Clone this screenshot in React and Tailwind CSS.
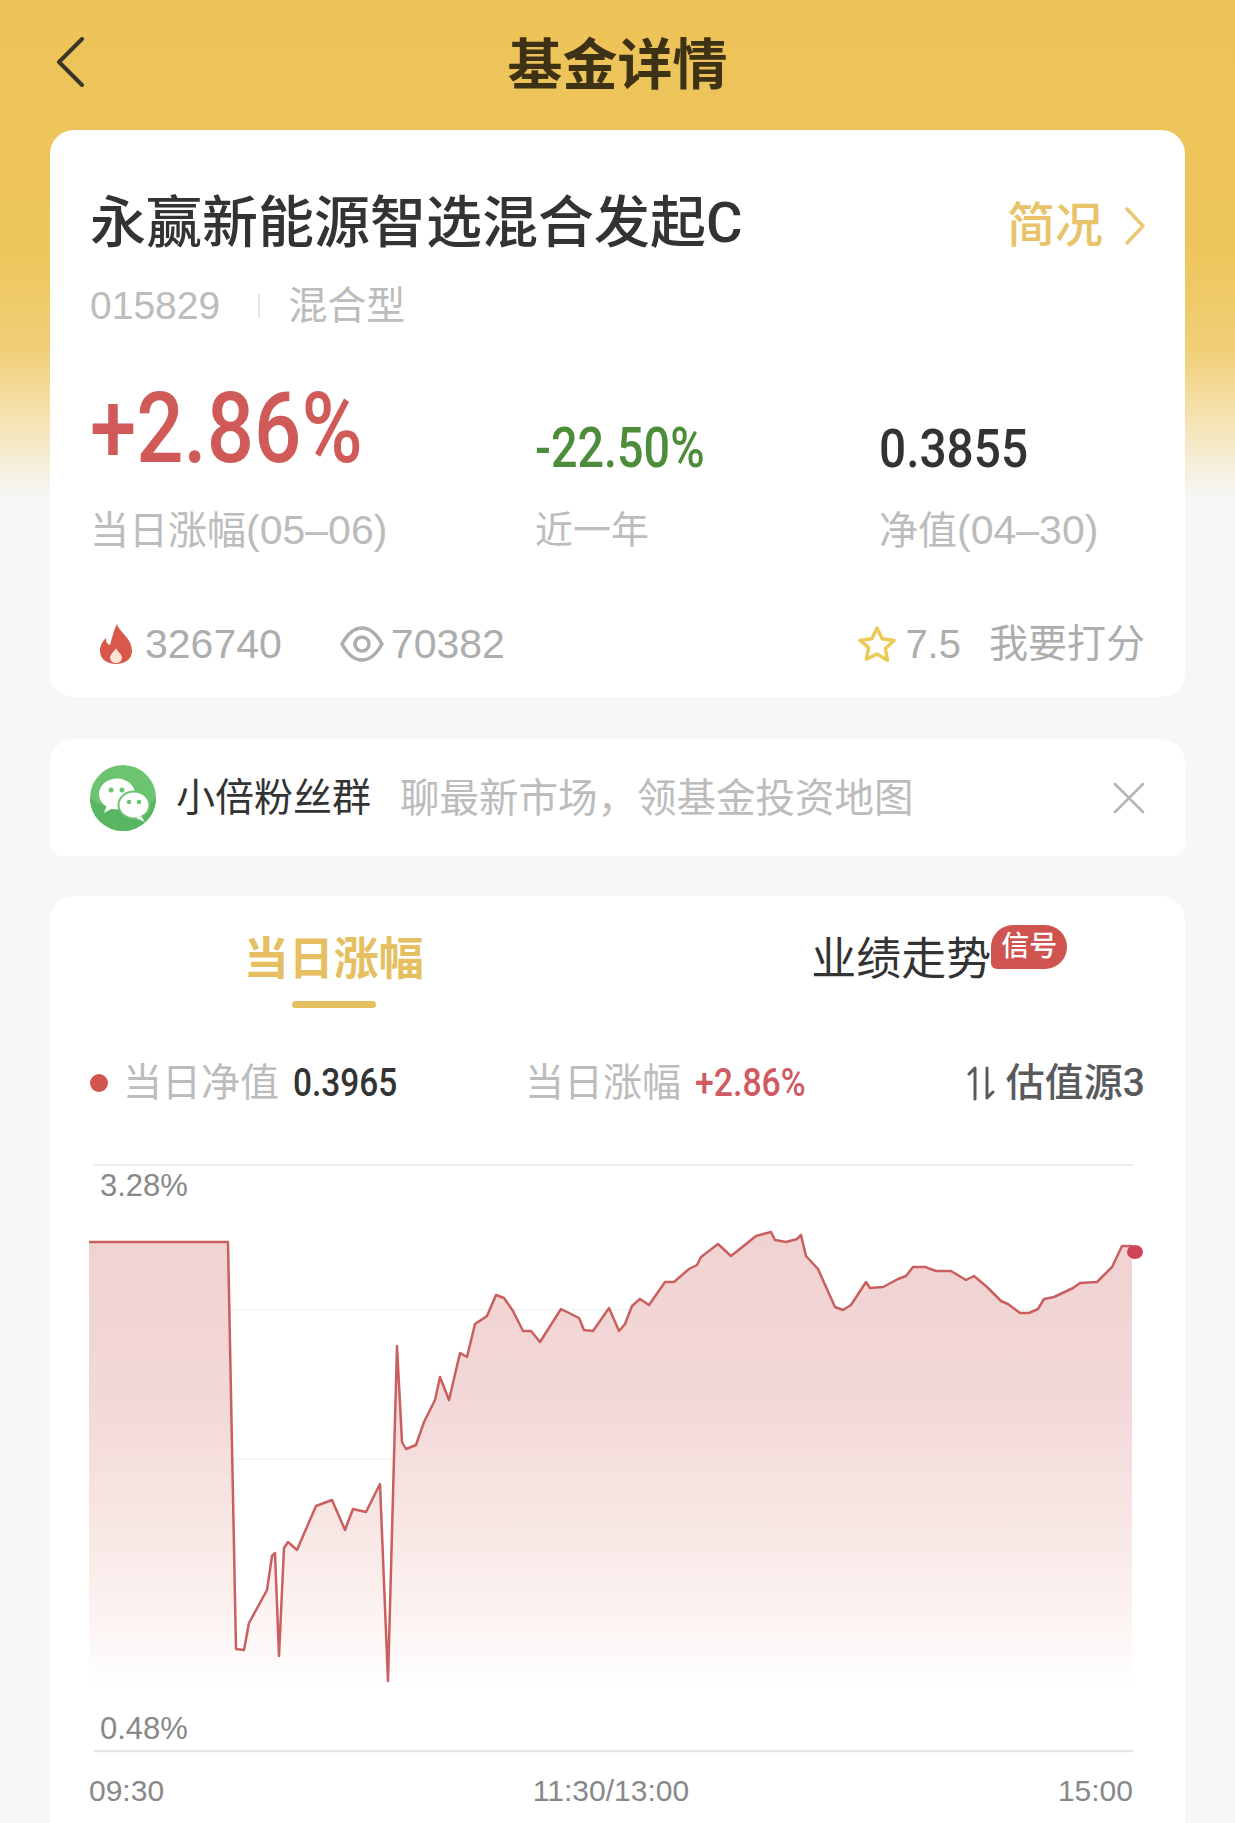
// chart points read off the screenshot, page coordinates
const LINE = [
  [89,1242],[228,1242],[236,1649],[244,1650],[249,1623],[267,1590],[272,1556],[275,1553],[279,1656],[284,1548],[288,1542],[297,1550],
  [316,1506],[332,1500],[345,1530],[353,1509],[366,1512],[380,1484],[388,1681],[397,1346],[402,1442],[406,1449],[416,1445],[424,1422],
  [435,1400],[440,1377],[449,1400],[460,1353],[467,1357],[475,1324],[487,1316],[496,1295],[504,1298],[513,1311],[523,1331],[531,1331],
  [540,1342],[561,1309],[579,1318],[584,1330],[593,1331],[609,1308],[619,1331],[625,1324],[632,1306],[640,1299],[649,1305],[665,1282],
  [674,1282],[689,1269],[697,1265],[701,1257],[718,1244],[731,1256],[756,1236],[771,1232],[775,1240],[786,1242],[797,1239],[801,1235],
  [806,1256],[818,1269],[835,1307],[843,1310],[851,1305],[866,1282],[870,1288],[883,1287],[898,1279],[906,1276],[913,1267],[925,1267],
  [936,1271],[951,1271],[966,1280],[974,1276],[987,1287],[1001,1301],[1008,1304],[1020,1313],[1029,1313],[1038,1309],[1044,1299],[1054,1297],
  [1073,1288],[1080,1283],[1097,1282],[1112,1267],[1122,1246],[1132,1246],
];

const linePath = 'M' + LINE.map(p => p.join(' ')).join('L');
const areaPath = linePath + 'L1132 1690L89 1690Z';

function AreaChart() {
  return (
    <div className="relative mt-[54px] ml-[39px] w-[1056px] h-[595px]">
      <svg width="1056" height="595" viewBox="89 1160 1056 595" fill="none" className="block">
        <defs>
          <linearGradient id="area" gradientUnits="userSpaceOnUse" x1="0" y1="1242" x2="0" y2="1690">
            <stop offset="0" stopColor="#f0d2d1" />
            <stop offset="0.35" stopColor="#f3d8d9" />
            <stop offset="0.65" stopColor="#f8e8e5" />
            <stop offset="0.85" stopColor="#fcf4f3" />
            <stop offset="1" stopColor="#ffffff" />
          </linearGradient>
        </defs>
        <path d="M94 1165H1133" stroke="#ececec" strokeWidth="2" />
        <path d="M94 1310H1133M94 1459H1133" stroke="#f5f5f5" strokeWidth="2" />
        <path d="M94 1751H1133" stroke="#e6e7ea" strokeWidth="2.5" />
        <path d={areaPath} fill="url(#area)" />
        <path d={linePath} stroke="#c9605f" strokeWidth="2.5" strokeLinejoin="round" />
        <ellipse cx="1135" cy="1252" rx="8" ry="7" fill="#cf4355" />
      </svg>
      <span className="absolute left-[11px] top-[11px] text-[31px] leading-[30px] text-[#888]">3.28%</span>
      <span className="absolute left-[11px] top-[554px] text-[31px] leading-[30px] text-[#888]">0.48%</span>
    </div>
  );
}

function WechatIcon() {
  return (
    <svg width="66" height="66" viewBox="0 0 66 66" className="shrink-0">
      <circle cx="33" cy="33" r="33" fill="#6cc471" />
      <path d="M0 33a33 33 0 0 0 66 0c-8 10-18 13-26 9-8-3-26 4-40-9Z" fill="#58b562" />
      <ellipse cx="27" cy="29" rx="18" ry="15.5" fill="#fff" />
      <path d="M17 40l-3 8 9-5Z" fill="#fff" />
      <ellipse cx="44" cy="40" rx="15.5" ry="13.5" fill="#fff" stroke="#6cc471" strokeWidth="2" />
      <path d="M51 51l4 6-9-4Z" fill="#fff" />
      <circle cx="21" cy="25" r="2.5" fill="#6cc471" />
      <circle cx="32" cy="25" r="2.5" fill="#6cc471" />
      <circle cx="39" cy="37" r="2.2" fill="#6cc471" />
      <circle cx="49" cy="37" r="2.2" fill="#6cc471" />
    </svg>
  );
}

export default function App() {
  return (
    <div className="w-[1235px] h-[1823px] overflow-hidden bg-[linear-gradient(180deg,#edc358_0px,#edc65d_260px,#f0cf78_350px,#f5e6ba_430px,#f6f7f9_500px)] font-['Liberation_Sans','Noto_Sans_CJK_SC',sans-serif]">
      {/* Nav */}
      <div className="relative h-[130px] flex items-start justify-center pt-[34px]">
        <svg width="30" height="50" viewBox="0 0 30 50" fill="none" className="absolute left-[55px] top-[37px]">
          <path d="M27 2 4 25l23 23" stroke="#3a3528" strokeWidth="4" strokeLinecap="round" strokeLinejoin="round" />
        </svg>
        <h1 className="text-[55px] leading-[62px] font-bold text-[#3d3216]">基金详情</h1>
      </div>

      {/* Fund card */}
      <div className="mx-[50px] h-[567px] rounded-[24px] bg-white px-[40px] pt-[61px]">
        <div className="flex items-center justify-between h-[64px]">
          <h2 className="text-[56px] leading-[64px] font-medium text-[#333] whitespace-nowrap">永赢新能源智选混合发起<span className="font-[Roboto]">C</span></h2>
          <div className="flex items-center gap-[22px] pt-[5px]">
            <span className="text-[48px] leading-[56px] font-medium text-[#e8c36a]">简况</span>
            <svg width="20" height="38" viewBox="0 0 20 38" fill="none">
              <path d="M2 2l16 17L2 36" stroke="#ecc873" strokeWidth="3.5" strokeLinecap="round" strokeLinejoin="round" />
            </svg>
          </div>
        </div>
        <div className="mt-[29px] flex items-center h-[44px] text-[39px] leading-[44px] text-[#bcbcbc]">
          <span>015829</span>
          <span className="ml-[38px] w-[2px] h-[24px] bg-[#e6e6e6]"></span>
          <span className="ml-[28px]">混合型</span>
        </div>

        <div className="mt-[46px] grid grid-cols-[445px_344px_1fr]">
          <div>
            <div className="h-[104px] flex items-end">
              <span className="origin-bottom-left scale-x-[0.85] font-[Roboto] text-[98px] leading-[98px] font-medium text-[#cf5a57] whitespace-nowrap">+2.86%</span>
            </div>
            <p className="mt-[30px] text-[39px] leading-[44px] text-[#bcbcbc] whitespace-nowrap">当日涨幅<span className="text-[41px]">(05–06)</span></p>
          </div>
          <div>
            <div className="h-[104px] pb-[2px] flex items-end">
              <span className="origin-bottom-left scale-x-[0.85] font-[Roboto] text-[55px] leading-[55px] font-medium text-[#4c8c3a] whitespace-nowrap">-22.50%</span>
            </div>
            <p className="mt-[30px] text-[38px] leading-[44px] text-[#bcbcbc]">近一年</p>
          </div>
          <div>
            <div className="h-[104px] pb-[2px] flex items-end">
              <span className="origin-bottom-left scale-x-[0.885] font-[Roboto] text-[54px] leading-[55px] font-medium text-[#333] whitespace-nowrap">0.3855</span>
            </div>
            <p className="mt-[30px] text-[39px] leading-[44px] text-[#bcbcbc] whitespace-nowrap">净值<span className="text-[41px]">(04–30)</span></p>
          </div>
        </div>

        <div className="mt-[69px] flex items-center justify-between text-[39px] leading-[44px] text-[#adadad]">
          <div className="flex items-center">
            <svg width="36" height="40" viewBox="0 0 36 40" className="ml-[8px]">
              <path d="M19 0c2 8 15 14 15 27 0 8-7 13-16 13S2 35 2 27c0-6 3-10 6-13 0 4 1 6 4 7 2-6 3-13 7-21Z" fill="#d9574b" />
              <path d="M18 24c1 3 6 6 6 10 0 3-3 5-6 5s-6-2-6-5c0-4 4-6 6-10Z" fill="#fbe3d6" />
            </svg>
            <span className="ml-[11px] text-[41px]">326740</span>
            <svg width="44" height="36" viewBox="0 0 44 36" fill="none" className="ml-[58px]">
              <path d="M2 18C8 7 14 2 22 2s14 5 20 16c-6 11-12 16-20 16S8 29 2 18Z" stroke="#adadad" strokeWidth="3.500" />
              <circle cx="22" cy="18" r="7" stroke="#adadad" strokeWidth="3.500" />
            </svg>
            <span className="ml-[7px] text-[41px]">70382</span>
          </div>
          <div className="flex items-center">
            <svg width="40" height="38" viewBox="0 0 40 38" fill="none">
              <path d="M20 3l5.200 10.800 11.800 1.600-8.600 8.200 2.100 11.700L20 29l-10.500 5.300 2.100-11.700L3 15.400l11.800-1.600Z" stroke="#ecca57" strokeWidth="3.500" strokeLinejoin="round" />
            </svg>
            <span className="ml-[8px] text-[40px]">7.5</span>
            <span className="ml-[28px]">我要打分</span>
          </div>
        </div>
      </div>

      {/* Group banner */}
      <div className="mt-[42px] mx-[50px] h-[117px] rounded-t-[24px] rounded-b-[12px] bg-white pl-[40px] pr-[40px] flex items-center">
        <WechatIcon />
        <span className="ml-[20px] text-[39px] leading-[44px] text-[#333]">小倍粉丝群</span>
        <span className="ml-[29px] text-[39.500px] leading-[44px] text-[#bcbcbc] whitespace-nowrap">聊最新市场，领基金投资地图</span>
        <svg width="32" height="32" viewBox="0 0 32 32" fill="none" className="ml-auto">
          <path d="M2 2l28 28M30 2 2 30" stroke="#b5b5b5" strokeWidth="2.500" strokeLinecap="round" />
        </svg>
      </div>

      {/* Chart card */}
      <div className="mt-[40px] mx-[50px] h-[927px] rounded-t-[24px] bg-white pt-[34px]">
        <div className="grid grid-cols-2">
          <div className="flex flex-col items-center">
            <span className="text-[45px] leading-[60px] font-bold text-[#e5bf62]">当日涨幅</span>
            <span className="mt-[11px] w-[84px] h-[7px] rounded-full bg-[#e5bf62]"></span>
          </div>
          <div className="flex justify-center">
            <span className="relative text-[45px] leading-[60px] text-[#333]">
              业绩走势
              <span className="absolute left-full top-[-5px] w-[76px] h-[44px] rounded-[22px] rounded-bl-[6px] bg-[#cf5450] text-white text-[28px] leading-[44px] text-center font-medium">信号</span>
            </span>
          </div>
        </div>

        <div className="mt-[52px] px-[40px] h-[46px] flex items-center text-[39px] leading-[46px] text-[#bcbcbc]">
          <span className="w-[18px] h-[18px] rounded-full bg-[#d3544e]"></span>
          <span className="ml-[15px]">当日净值</span>
          <span className="ml-[14px] origin-left scale-x-[0.88] w-[105px] font-[Roboto] text-[38px] font-medium text-[#333]">0.3965</span>
          <span className="ml-[127px]">当日涨幅</span>
          <span className="ml-[14px] origin-left scale-x-[0.89] w-[111px] font-[Roboto] text-[38px] font-medium text-[#cf5a62]">+2.86%</span>
          <span className="ml-auto flex items-center font-medium text-[#5a5a5e]">
            <svg width="28" height="36" viewBox="0 0 28 36" fill="none">
              <path d="M8 34V3L2 9M20 3v30l6-6" stroke="#5a5a5e" strokeWidth="3" strokeLinecap="round" strokeLinejoin="round" />
            </svg>
            <span className="ml-[11px]">估值源<span className="font-[Roboto]">3</span></span>
          </span>
        </div>

        <AreaChart />

        <div className="mt-[18px] ml-[39px] w-[1044px] flex justify-between text-[30px] leading-[36px] text-[#888]">
          <span>09:30</span>
          <span>11:30/13:00</span>
          <span>15:00</span>
        </div>
      </div>
    </div>
  );
}
